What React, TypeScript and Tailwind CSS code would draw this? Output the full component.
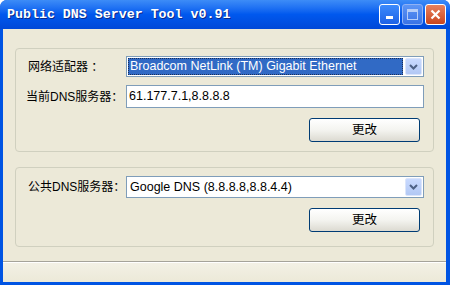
import React from "react";

const font = "font-['Liberation_Sans','Noto_Sans_CJK_SC',sans-serif]";

const Chevron: React.FC = () => (
  <svg width="9" height="6" viewBox="0 0 9 6">
    <path d="M1 1 L4.5 4.5 L8 1" fill="none" stroke="#4d6185" strokeWidth="2" />
  </svg>
);

const DropButton: React.FC = () => (
  <div className="flex h-full w-[17px] items-center justify-center rounded-[2px] border border-[#dbe5fb] bg-gradient-to-b from-[#c9daff] to-[#b2c8f4]">
    <Chevron />
  </div>
);

const XpButton: React.FC<{ label: string }> = ({ label }) => (
  <button className="flex h-[24px] w-[111px] items-center justify-center rounded-[3px] border border-[#003c74] bg-gradient-to-b from-white via-[#f4f4f0] to-[#dcdad1] text-[12.5px] text-black">
    {label}
  </button>
);

const Label: React.FC<{ text: string; className?: string }> = ({ text, className }) => (
  <span className={`w-[98px] shrink-0 whitespace-nowrap text-[12px] text-black ${className ?? ""}`}>
    {text}
  </span>
);

const App: React.FC = () => {
  return (
    <div className={`flex h-[285px] w-[450px] flex-col overflow-hidden rounded-t-[7px] bg-[#0054e3] ${font}`}>
      {/* title bar */}
      <div className="flex h-[29px] shrink-0 items-center bg-gradient-to-b from-[#3d8cf7] via-[#0058ee] to-[#0048d8] pl-[7px] pr-[4px]">
        <span className="flex-1 font-['Liberation_Mono',monospace] text-[13.3px] font-bold text-white [text-shadow:1px_1px_0_#0a2a8a]">
          Public DNS Server Tool v0.91
        </span>
        <div className="flex gap-[2px]">
          <div className="flex h-[21px] w-[21px] items-end justify-center rounded-[3px] border border-white bg-gradient-to-b from-[#3c8afc] to-[#1e62e6] pb-[5px]">
            <div className="h-[3px] w-[7px] bg-white" />
          </div>
          <div className="flex h-[21px] w-[21px] items-center justify-center rounded-[3px] border border-[#8fb2f5] bg-gradient-to-b from-[#5d95f5] to-[#3a73e6]">
            <div className="h-[11px] w-[11px] border border-t-[3px] border-[#b5cdf8]" />
          </div>
          <div className="flex h-[21px] w-[21px] items-center justify-center rounded-[3px] border border-white bg-gradient-to-b from-[#e8815d] to-[#c9441c]">
            <svg width="11" height="11" viewBox="0 0 11 11">
              <path d="M1.5 1.5 L9.5 9.5 M9.5 1.5 L1.5 9.5" stroke="white" strokeWidth="2.2" />
            </svg>
          </div>
        </div>
      </div>

      {/* client area */}
      <div className="flex flex-1 flex-col pb-[3px] pl-[3px] pr-[4px]">
        <div className="flex flex-1 flex-col bg-[#ece9d8] pt-[19px]">
          {/* group 1 */}
          <div className="mx-[12px] flex h-[104px] flex-col rounded-[4px] border border-[#d0d0bf] pl-[12px] pr-[9px] pt-[7px]">
            <div className="flex h-[21px] items-center">
              <Label text="网络适配器 ：" />
              <div className="flex h-[21px] flex-1 items-center gap-[2px] border border-[#7f9db9] bg-white p-[1px]">
                <div className="flex h-full flex-1 items-center border border-dotted border-[#1c2f57] bg-[#316ac5] pl-[1px] text-[12.5px] text-white">
                  Broadcom NetLink (TM) Gigabit Ethernet
                </div>
                <DropButton />
              </div>
            </div>
            <div className="mt-[8px] flex h-[23px] items-center">
              <Label text="当前DNS服务器：" className="-ml-[2px] w-[100px]" />
              <div className="flex h-[23px] flex-1 items-center border border-[#7f9db9] bg-white pl-[2px] text-[12.5px] text-black">
                61.177.7.1,8.8.8.8
              </div>
            </div>
            <div className="mt-[10px] flex justify-end pr-[4px]">
              <XpButton label="更改" />
            </div>
          </div>

          {/* group 2 */}
          <div className="mx-[12px] mt-[15px] flex h-[80px] flex-col rounded-[4px] border border-[#d0d0bf] pl-[12px] pr-[9px] pt-[8px]">
            <div className="flex h-[22px] items-center">
              <Label text="公共DNS服务器：" />
              <div className="flex h-[22px] flex-1 items-center gap-[2px] border border-[#7f9db9] bg-white p-[1px]">
                <div className="flex h-full flex-1 items-center pl-[2px] text-[12.5px] text-black">
                  Google DNS (8.8.8.8,8.8.4.4)
                </div>
                <DropButton />
              </div>
            </div>
            <div className="mt-[10px] flex justify-end pr-[4px]">
              <XpButton label="更改" />
            </div>
          </div>

          <div className="flex-1" />
          {/* status bar */}
          <div className="h-[21px] border-t border-[#a5a39a] bg-gradient-to-b from-[#f3f1e6] to-[#ece9d8] shadow-[inset_0_1px_0_white]" />
        </div>
      </div>
    </div>
  );
};

export default App;
